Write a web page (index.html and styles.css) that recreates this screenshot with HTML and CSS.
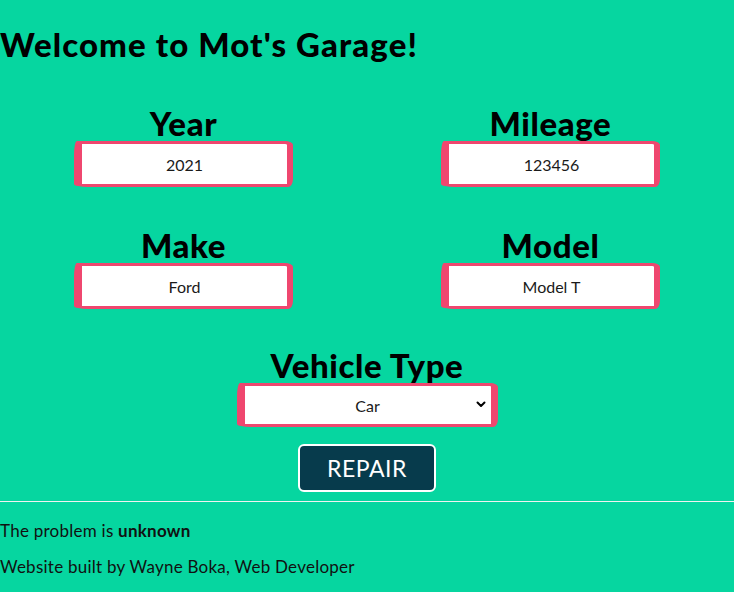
FILE: index.html
```html
<!DOCTYPE html>
<html>
<head>
<meta charset="utf-8">
<link rel="stylesheet" href="styles.css">
</head>
<body>
<h1 class="title">Welcome to Mot's Garage!</h1>
<form class="form">
  <div class="field">
    <label class="label">Year</label>
    <input class="box" type="text" value="2021">
  </div>
  <div class="field">
    <label class="label">Mileage</label>
    <input class="box" type="text" value="123456">
  </div>
  <div class="field">
    <label class="label">Make</label>
    <input class="box" type="text" value="Ford">
  </div>
  <div class="field">
    <label class="label">Model</label>
    <input class="box" type="text" value="Model T">
  </div>
  <div class="field field-wide">
    <label class="label">Vehicle Type</label>
    <div class="select-wrap">
      <select class="box select">
        <option>Car</option>
      </select>
      <svg class="chev" width="10" height="7" viewBox="0 0 10 7"><path d="M1.5 1.5 L5 5 L8.5 1.5" fill="none" stroke="#000" stroke-width="2" stroke-linecap="round" stroke-linejoin="round"/></svg>
    </div>
  </div>
  <div class="actions">
    <button class="btn" type="button">REPAIR</button>
  </div>
</form>
<hr class="rule">
<p class="text">The problem is <b>unknown</b></p>
<p class="text">Website built by Wayne Boka, Web Developer</p>
</body>
</html>
```
FILE: styles.css
```css
html, body {
  margin: 0;
  padding: 0;
  background: #06d6a0;
}
body {
  font-family: "Lato", "Open Sans", sans-serif;
  color: #000;
}
.title {
  margin: 22px 0 0;
  font-size: 33px;
  line-height: 44px;
  font-weight: 900;
  letter-spacing: 1.1px;
}
.form {
  display: grid;
  grid-template-columns: 1fr 1fr;
  row-gap: 41px;
  margin-top: 40px;
}
.field {
  display: flex;
  flex-direction: column;
  align-items: center;
}
.field-wide {
  grid-column: 1 / 3;
  margin-top: -2px;
}
.label {
  font-size: 33px;
  font-weight: 900;
  line-height: 34px;
  letter-spacing: 0.6px;
  margin-bottom: 1px;
}
.box {
  box-sizing: border-box;
  width: 219px;
  height: 46px;
  background: #fff;
  border-style: solid;
  border-color: #ef476f;
  border-width: 3px 6px 3px 8px;
  border-radius: 3px 8px 5px 14px / 14px 4px 8px 3px;
  font-family: "Lato", sans-serif;
  font-size: 16px;
  color: #1a1a1a;
  text-align: center;
  outline: none;
  padding: 0;
}
.select-wrap {
  position: relative;
}
.select {
  width: 261px;
  height: 44px;
  appearance: none;
  -webkit-appearance: none;
  text-align: center;
  text-align-last: center;
  border-width: 3px 7px 3px 8px;
}
.chev {
  position: absolute;
  right: 12px;
  top: 18px;
}
.actions {
  grid-column: 1 / 3;
  display: flex;
  justify-content: center;
  margin-top: -24px;
}
.btn {
  width: 138px;
  height: 48px;
  background: #073b4c;
  color: #fff;
  border: 2px solid #fff;
  border-radius: 6px;
  font-family: "Lato", sans-serif;
  font-size: 23px;
  letter-spacing: 0.5px;
}
.rule {
  margin: 9px 0 0;
  border: 0;
  border-top: 1px solid #f2f2f2;
  height: 0;
}
.text {
  margin: 15px 0 0;
  font-size: 17px;
  line-height: 28px;
  letter-spacing: 0.25px;
  color: #111;
}
.text + .text {
  margin-top: 8px;
}
```
